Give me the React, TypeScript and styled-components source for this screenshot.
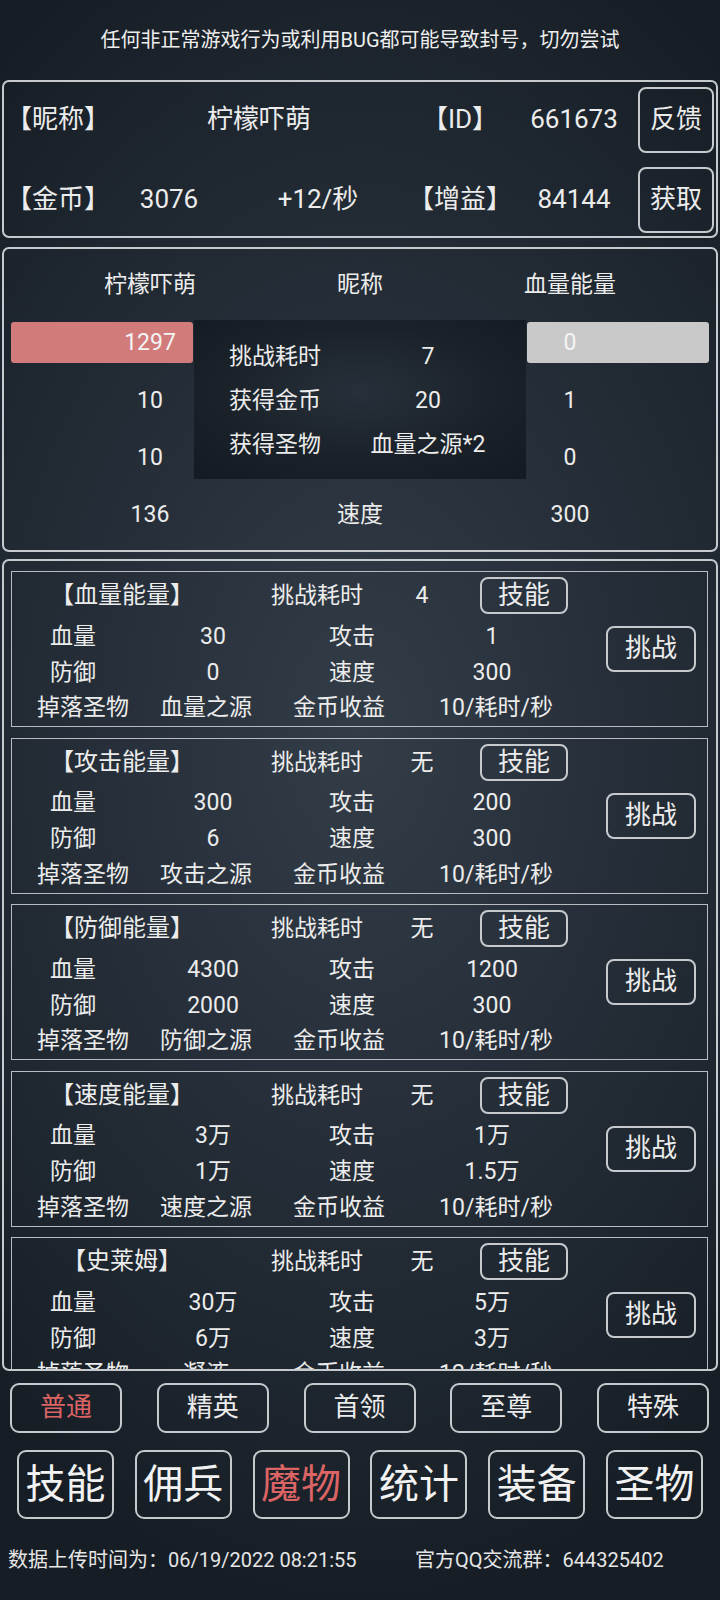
import React from "react";
import styled, { createGlobalStyle } from "styled-components";

const GlobalStyle = createGlobalStyle`
  html, body { margin: 0; padding: 0; background: #151c24; }
  body { font-family: Roboto, "Noto Sans CJK SC", sans-serif; color: #ececec; line-height: 1.2; }
  * { box-sizing: border-box; }
`;

const RED = "#dc6464";
const LINE = "#c6cacd";

const Page = styled.div`
  width: 720px;
  height: 1600px;
  overflow: hidden;
  background: radial-gradient(ellipse 80% 55% at 50% 46%, #333d47 0%, #27303a 42%, #161d25 100%);
  display: flex;
  flex-direction: column;
`;

const Notice = styled.div`
  height: 80px;
  display: flex;
  align-items: center;
  justify-content: center;
  font-size: 20px;
  color: #eeeeee;
`;

const Panel = styled.section`
  margin: 0 2px;
  border: 2px solid ${LINE};
  border-radius: 7px;
  position: relative;
  flex-shrink: 0;
`;

const InfoPanel = styled(Panel)`
  height: 158px;
  padding-top: 5px;
  display: grid;
  grid-template-columns: 106px 118px 180px 104px 124px 80px;
  grid-template-rows: 66px 66px;
  row-gap: 14px;
  align-items: center;
  font-size: 26px;
`;

const InfoLabel = styled.span`
  justify-self: start;
  white-space: nowrap;
  padding-left: 2px;
`;

const InfoValue = styled.span<{ $span?: number }>`
  justify-self: center;
  white-space: nowrap;
  grid-column: span ${(p) => p.$span ?? 1};
`;

const OutlineButton = styled.button`
  border: 2px solid ${LINE};
  border-radius: 8px;
  background: transparent;
  color: #ececec;
  font-family: inherit;
  line-height: 1.2;
  display: flex;
  align-items: center;
  justify-content: center;
  padding: 0;
  white-space: nowrap;
`;

const InfoButton = styled(OutlineButton)`
  justify-self: center;
  width: 76px;
  height: 66px;
  font-size: 26px;
`;

const BattlePanel = styled(Panel)`
  margin-top: 9px;
  height: 305px;
  padding: 13px 0 6.5px;
  display: flex;
  flex-direction: column;
  font-size: 23px;
`;

const StatRow = styled.div<{ $h: number }>`
  height: ${(p) => p.$h}px;
  display: grid;
  grid-template-columns: repeat(3, 210px);
  justify-content: center;
  align-items: center;
  justify-items: center;
  white-space: nowrap;
`;

const BarRow = styled.div`
  margin: 14px 0 9.5px;
  height: 41px;
  display: grid;
  & > * {
    grid-area: 1 / 1;
  }
`;

const BarTrack = styled.div`
  display: flex;
  justify-content: space-between;
  padding: 0 7px;
`;

const Bar = styled.div<{ $tone: "hp" | "empty" }>`
  width: 182px;
  height: 41px;
  border-radius: 3px;
  background: ${(p) => (p.$tone === "hp" ? "#d27b7b" : "#c9c9c9")};
`;

const BarText = styled.span`
  color: #f4f4f4;
`;

const ResultPopup = styled.div`
  position: absolute;
  top: 71px;
  left: 190px;
  width: 332px;
  height: 159px;
  padding: 15px 9px 0 35px;
  background: radial-gradient(ellipse 70% 70% at 50% 45%, #27303a 0%, #1a2129 60%, #151b22 100%);
  display: grid;
  grid-template-columns: 110px 178px;
  grid-auto-rows: 44px;
  align-items: center;
  font-size: 23px;
  white-space: nowrap;
`;

const PopupValue = styled.span`
  justify-self: center;
`;

const MonsterPanel = styled(Panel)`
  margin-top: 7px;
  height: 812px;
  overflow: hidden;
  padding: 10px 8px 0 7px;
  display: flex;
  flex-direction: column;
  gap: 10.5px;
`;

const Card = styled.div`
  flex-shrink: 0;
  height: 156px;
  border: 1px solid #b8bcc0;
  padding-top: 5px;
  display: flex;
`;

const CardMain = styled.div`
  width: 594px;
  display: flex;
  flex-direction: column;
`;

const CardLine = styled.div<{ $cols: string; $h: number }>`
  display: grid;
  grid-template-columns: ${(p) => p.$cols};
  height: ${(p) => p.$h}px;
  align-items: center;
`;

const TitleLine = styled(CardLine)`
  margin-bottom: 4px;
`;

const Cell = styled.div<{ $size?: number }>`
  display: flex;
  justify-content: center;
  align-items: center;
  white-space: nowrap;
  font-size: ${(p) => p.$size ?? 23}px;
`;

const CardSide = styled.div`
  flex: 1;
  display: flex;
  align-items: center;
  padding-bottom: 5px;
`;

const SkillButton = styled(OutlineButton)`
  width: 88px;
  height: 37px;
  font-size: 26px;
`;

const ChallengeButton = styled(OutlineButton)`
  width: 90px;
  height: 46px;
  font-size: 26px;
`;

const TabBar = styled.nav`
  margin-top: 12px;
  height: 50px;
  padding: 0 11px 0 10px;
  display: flex;
  justify-content: space-between;
  flex-shrink: 0;
`;

const TabButton = styled(OutlineButton)<{ $active?: boolean }>`
  width: 112px;
  height: 50px;
  font-size: 26px;
  border-radius: 9px;
  color: ${(p) => (p.$active ? RED : "#ececec")};
`;

const NavBar = styled.nav`
  margin-top: 17px;
  height: 69px;
  padding: 0 17px;
  display: flex;
  justify-content: space-between;
  flex-shrink: 0;
`;

const NavButton = styled(OutlineButton)<{ $active?: boolean }>`
  width: 97px;
  height: 69px;
  font-size: 40px;
  border-radius: 9px;
  color: ${(p) => (p.$active ? RED : "#f2f2f2")};
`;

const Footer = styled.footer`
  margin-top: 27px;
  height: 28px;
  padding-left: 8px;
  display: flex;
  align-items: center;
  font-size: 20px;
  color: #e6e6e6;
  white-space: nowrap;
`;

const FooterItem = styled.span<{ $w?: number }>`
  width: ${(p) => (p.$w ? `${p.$w}px` : "auto")};
`;

type Monster = {
  name: string;
  time: string;
  hp: string;
  atk: string;
  def: string;
  spd: string;
  drop: string;
  gold: string;
};

const monsters: Monster[] = [
  { name: "【血量能量】", time: "4", hp: "30", atk: "1", def: "0", spd: "300", drop: "血量之源", gold: "10/耗时/秒" },
  { name: "【攻击能量】", time: "无", hp: "300", atk: "200", def: "6", spd: "300", drop: "攻击之源", gold: "10/耗时/秒" },
  { name: "【防御能量】", time: "无", hp: "4300", atk: "1200", def: "2000", spd: "300", drop: "防御之源", gold: "10/耗时/秒" },
  { name: "【速度能量】", time: "无", hp: "3万", atk: "1万", def: "1万", spd: "1.5万", drop: "速度之源", gold: "10/耗时/秒" },
  { name: "【史莱姆】", time: "无", hp: "30万", atk: "5万", def: "6万", spd: "3万", drop: "凝液", gold: "12/耗时/秒" },
];

const TITLE_COLS = "220px 170px 40px 164px";
const STAT_COLS = "122px 158px 120px 160px";
const DROP_COLS = "142px 104px 162px 152px";

function MonsterCard({ m }: { m: Monster }) {
  return (
    <Card>
      <CardMain>
        <TitleLine $cols={TITLE_COLS} $h={38}>
          <Cell $size={24}>{m.name}</Cell>
          <Cell>挑战耗时</Cell>
          <Cell>{m.time}</Cell>
          <Cell>
            <SkillButton>技能</SkillButton>
          </Cell>
        </TitleLine>
        <CardLine $cols={STAT_COLS} $h={36}>
          <Cell>血量</Cell>
          <Cell>{m.hp}</Cell>
          <Cell>攻击</Cell>
          <Cell>{m.atk}</Cell>
        </CardLine>
        <CardLine $cols={STAT_COLS} $h={36}>
          <Cell>防御</Cell>
          <Cell>{m.def}</Cell>
          <Cell>速度</Cell>
          <Cell>{m.spd}</Cell>
        </CardLine>
        <CardLine $cols={DROP_COLS} $h={36}>
          <Cell>掉落圣物</Cell>
          <Cell>{m.drop}</Cell>
          <Cell>金币收益</Cell>
          <Cell>{m.gold}</Cell>
        </CardLine>
      </CardMain>
      <CardSide>
        <ChallengeButton>挑战</ChallengeButton>
      </CardSide>
    </Card>
  );
}

const tabs = ["普通", "精英", "首领", "至尊", "特殊"];
const navs = ["技能", "佣兵", "魔物", "统计", "装备", "圣物"];

export default function App() {
  return (
    <>
      <GlobalStyle />
      <Page>
        <Notice>任何非正常游戏行为或利用BUG都可能导致封号，切勿尝试</Notice>

        <InfoPanel>
          <InfoLabel>【昵称】</InfoLabel>
          <InfoValue $span={2}>柠檬吓萌</InfoValue>
          <InfoValue>【ID】</InfoValue>
          <InfoValue>661673</InfoValue>
          <InfoButton>反馈</InfoButton>

          <InfoLabel>【金币】</InfoLabel>
          <InfoValue>3076</InfoValue>
          <InfoValue>+12/秒</InfoValue>
          <InfoValue>【增益】</InfoValue>
          <InfoValue>84144</InfoValue>
          <InfoButton>获取</InfoButton>
        </InfoPanel>

        <BattlePanel>
          <StatRow $h={46}>
            <span>柠檬吓萌</span>
            <span>昵称</span>
            <span>血量能量</span>
          </StatRow>
          <BarRow>
            <BarTrack>
              <Bar $tone="hp" />
              <Bar $tone="empty" />
            </BarTrack>
            <StatRow $h={41}>
              <BarText>1297</BarText>
              <span />
              <BarText>0</BarText>
            </StatRow>
          </BarRow>
          <StatRow $h={57}>
            <span>10</span>
            <span />
            <span>1</span>
          </StatRow>
          <StatRow $h={57}>
            <span>10</span>
            <span />
            <span>0</span>
          </StatRow>
          <StatRow $h={57}>
            <span>136</span>
            <span>速度</span>
            <span>300</span>
          </StatRow>

          <ResultPopup>
            <span>挑战耗时</span>
            <PopupValue>7</PopupValue>
            <span>获得金币</span>
            <PopupValue>20</PopupValue>
            <span>获得圣物</span>
            <PopupValue>血量之源*2</PopupValue>
          </ResultPopup>
        </BattlePanel>

        <MonsterPanel>
          {monsters.map((m) => (
            <MonsterCard key={m.name} m={m} />
          ))}
        </MonsterPanel>

        <TabBar>
          {tabs.map((t, i) => (
            <TabButton key={t} $active={i === 0}>
              {t}
            </TabButton>
          ))}
        </TabBar>

        <NavBar>
          {navs.map((t, i) => (
            <NavButton key={t} $active={i === 2}>
              {t}
            </NavButton>
          ))}
        </NavBar>

        <Footer>
          <FooterItem $w={407}>数据上传时间为：06/19/2022 08:21:55</FooterItem>
          <FooterItem>官方QQ交流群：644325402</FooterItem>
        </Footer>
      </Page>
    </>
  );
}
